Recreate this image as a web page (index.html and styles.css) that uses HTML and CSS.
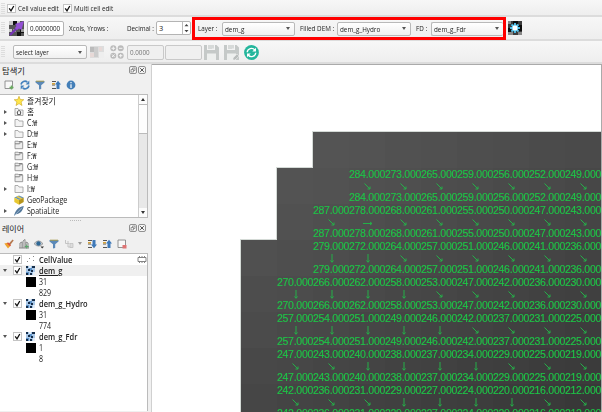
FILE: index.html
```html
<!DOCTYPE html>
<html lang="ko">
<head>
<meta charset="utf-8">
<title>QGIS</title>
<link rel="stylesheet" href="styles.css">
</head>
<body>
<svg class="defs" width="0" height="0">
  <symbol id="check" viewBox="0 0 9 9"><rect x=".5" y=".5" width="8" height="8" fill="#fff" stroke="#c4c4c4"/><path d="M2.2 4.4 4 6.8 6.8 2" fill="none" stroke="#111" stroke-width="1.3"/></symbol>
  <symbol id="folder" viewBox="0 0 10 10"><path d="M1 8.5v-7h3l1 1.500h4v5.500z" fill="#f3f3f3" stroke="#9a9a9a" stroke-width=".8"/></symbol>
  <symbol id="drive" viewBox="0 0 10 10"><path d="M1 8.700V1.200h3.200l.8 1h3.700v6.500z" fill="#eee" stroke="#858585" stroke-width=".8"/><path d="M1 3.800h4.500l1-1M5 1.500h3.500" fill="none" stroke="#777" stroke-width=".9"/></symbol>
  <symbol id="raster" viewBox="0 0 9 9"><path fill="#a9c8e8" d="M0 0h9v9H0z"/><path fill="#5c92c8" d="M3 2h3v3H3zM0 6h3v3H0z"/><path fill="#e4eef8" d="M3 0h2v2H3zM7 6h2v3H7z"/><path fill="#152d49" d="M0 0h2v2H0zM6 0h3v2H6zM2 3h2v2H2zM5 4h2v2H5zM0 7h2v2H0zM4 7h2v2H4z"/></symbol>
  <symbol id="funnel" viewBox="0 0 10 10"><path d="M.5 1h9v1.500L6.200 5.200V9L4 9.500V5.200L.5 2.500z" fill="#5b89b8"/><path d="M1 1.200h8" stroke="#a99b4e" stroke-width="1"/></symbol>
  <symbol id="refresh" viewBox="0 0 10 10"><path d="M1 4.500C1.500 1.500 5 .3 7.300 2M9 5.500C8.500 8.500 5 9.700 2.700 8" fill="none" stroke="#4581bd" stroke-width="1.700"/><path d="M9.300.5v4H5.600zM.7 9.500v-4h3.700z" fill="#4581bd"/></symbol>
  <symbol id="sheet" viewBox="0 0 10 10"><path d="M1 1h7.500v7.500H1z" fill="#f8f8f8" stroke="#888" stroke-width=".9"/></symbol>
  <symbol id="tree-arrow" viewBox="0 0 10 10"><path d="M1 1.500h4M1 5h3M1 8.500h4" stroke="#555" stroke-width="1.200"/><path d="M5.500 9V4.500H4L7 .8l3 3.700H8.500V9z" fill="#3e79b8"/><path d="M1 3h3v1.500H1z" fill="#d9a53b"/></symbol>
  <symbol id="float" viewBox="0 0 8 8"><rect x=".5" y=".5" width="7" height="7" rx="1.500" fill="#f5f5f5" stroke="#777" stroke-width=".8"/><path d="M2 3.500h2.500V6H2zM3.500 3.500V2H6v2.500H4.500" fill="none" stroke="#777" stroke-width=".7"/></symbol>
  <symbol id="close" viewBox="0 0 8 8"><rect x=".5" y=".5" width="7" height="7" rx="1.500" fill="#f5f5f5" stroke="#777" stroke-width=".8"/><path d="m2.200 2.200 3.600 3.600m0-3.600L2.200 5.800" stroke="#555" stroke-width="1"/></symbol>
  <symbol id="save" viewBox="0 0 15 15"><path d="M0 0h3v5h8V0h1.500L15 2.500V15H0z" fill="#c5c9c8"/><path d="M8 0h2v3.500H8zM4 0h4v4H4z" fill="#d7dad9"/><path d="M3 8.500h9V15H3z" fill="#edefee"/></symbol>
</svg>

<header class="bar bar-options">
  <i class="grip"></i>
  <label class="opt"><svg class="chk"><use href="#check"/></svg><span class="t w41">Cell value edit</span></label>
  <label class="opt opt2"><svg class="chk"><use href="#check"/></svg><span class="t">Multi cell edit</span></label>
</header>

<div class="bar bar-fields">
  <i class="grip"></i>
  <svg class="ico-cells" viewBox="0 0 15 15"><path fill="#555" d="M0 0h15v15H0z"/><path fill="#c9c9c9" d="M0 0h4v4H0zM8 0h3v4H8zM0 8h3v3H0z"/><path fill="#111" d="M4 0h4v4H4zM11 8h4v4h-4zM8 11h4v4H8z"/><path fill="#999" d="M4 8h3v3H4zM12 8h3v3h-3z"/><path d="m1 14 7-7" stroke="#7434b5" stroke-width="2.400"/><path fill="#9350d4" d="M15 0 12.500 9 10 7.500 8 9 6 7l1.500-2L6 3z"/></svg>
  <span class="field f-xy"><span class="n">0.0000000</span></span>
  <span class="t l-xy">Xcols, Yrows :</span>
  <span class="t l-dec">Decimal :</span>
  <span class="field f-dec">3<svg viewBox="0 0 7 12"><path d="M0 0v12" stroke="#bbb"/><path d="M2 4.200 4 2l2 2.200zM2 8l2 2.200L6 8z" fill="#444"/></svg></span>
  <div class="marked">
    <span class="t l-layer">Layer :</span><span class="combo c1"><span class="n">dem_g</span></span>
    <span class="t l-dem">Filled DEM :</span><span class="combo c2"><span class="n">dem_g_Hydro</span></span>
    <span class="t l-fd">FD :</span><span class="combo c3"><span class="n">dem_g_Fdr</span></span>
  </div>
  <svg class="ico-gear" viewBox="0 0 14 14"><path fill="#3c3c3c" d="M0 0h14v14H0z"/><path fill="#0d0d0d" d="M5 0h5v3H5zM10 4h4v6h-4zM0 7h3v4H0z"/><path fill="#888" d="M0 0h3v3H0zM10 11h4v3h-4zM0 11h5v3H0z"/><path d="M7 2v10M2 7h10M3.500 3.500l7 7m0-7-7 7" stroke="#48b9e6" stroke-width="1.900"/><circle cx="7" cy="7" r="3" fill="#fff" stroke="#6bd0f4"/></svg>
</div>

<div class="bar bar-edit">
  <i class="grip"></i>
  <span class="combo c-sel"><span class="n">select layer</span></span>
  <svg class="ico-dim" viewBox="0 0 14 12"><path fill="#ddd" d="M0 0h14v12H0z"/><path fill="#bbb" d="M0 1h4v5H0z"/><path fill="#ccc" d="M4 1h4v10H4z"/><path fill="#e7d9d7" d="M0 7h4v4H0zM9 1h3v4H9z"/><path fill="#eee" d="M9 6h5v6H9z"/></svg>
  <svg class="ico-ops" viewBox="0 0 14 14"><g fill="#bbb"><circle cx="3.300" cy="3.300" r="3"/><circle cx="10.700" cy="3.300" r="3"/><circle cx="3.300" cy="10.700" r="3"/><circle cx="10.700" cy="10.700" r="3"/></g><path d="M1.500 3.300h3.600M3.300 1.500v3.600M9 3.300h3.400M2 9.400l2.600 2.600m0-2.600L2 12M9 10.700h3.400M10.700 9v3.400" stroke="#f5f5f5"/></svg>
  <span class="field off f-v"><span class="n">0.0000</span></span><span class="field off f-e"></span>
  <svg class="ico-save"><use href="#save"/></svg>
  <svg class="ico-save s2" viewBox="0 0 15 15"><use href="#save"/><path d="m9 13 4-4 2 2-4 4H9z" fill="#b9bdbc" stroke="#eee" stroke-width=".6"/></svg>
  <svg class="ico-sync" viewBox="0 0 15 15"><circle cx="7.500" cy="7.500" r="7.400" fill="#24b69c"/><path d="M3.200 7.300A4.300 4.300 0 0 1 10.800 5M11.800 7.700A4.300 4.300 0 0 1 4.200 10" fill="none" stroke="#fff" stroke-width="1.400"/><path d="M12 2.800v3.700H8.300zM3 12.200V8.500h3.700z" fill="#fff"/></svg>
</div>

<main class="work">
  <aside class="docks">
    <section class="dock browser">
      <h2>탐색기<span class="ctl"><svg><use href="#float"/></svg><svg><use href="#close"/></svg></span></h2>
      <div class="tools">
        <svg viewBox="0 0 10 10"><use href="#sheet"/><path d="M7.500 5.500v4M5.500 7.500h4" stroke="#6aad5f" stroke-width="1.400"/></svg>
        <svg><use href="#refresh"/></svg>
        <svg><use href="#funnel"/></svg>
        <svg><use href="#tree-arrow"/></svg>
        <svg viewBox="0 0 10 10"><circle cx="5" cy="5" r="4.400" fill="#447fb8"/><path d="M5 4.300V8M5 2v1.300" stroke="#fff" stroke-width="1.200"/></svg>
      </div>
      <div class="list">
        <ul class="tree">
          <li><b></b><svg viewBox="0 0 10 10"><path d="m5 .3 1.300 3.200 3.500.2L7.100 6l.9 3.500-3-1.900-3 1.900L2.900 6 .2 3.700l3.500-.2z" fill="#ffe64a" stroke="#c9a51c" stroke-width=".6"/></svg><span class="ko">즐겨찾기</span></li>
          <li><b class="r"></b><svg viewBox="0 0 10 10"><use href="#folder"/><path d="M2.800 5.300 5 3.300l2.200 2M3.500 5v2.500h3V5" fill="none" stroke="#555" stroke-width=".9"/></svg><span class="ko">홈</span></li>
          <li><b class="r"></b><svg><use href="#folder"/></svg><span>C:₩</span></li>
          <li><b class="r"></b><svg><use href="#folder"/></svg><span>D:₩</span></li>
          <li><b></b><svg><use href="#drive"/></svg><span>E:₩</span></li>
          <li><b></b><svg><use href="#drive"/></svg><span>F:₩</span></li>
          <li><b></b><svg><use href="#drive"/></svg><span>G:₩</span></li>
          <li><b></b><svg><use href="#drive"/></svg><span>H:₩</span></li>
          <li><b class="r"></b><svg><use href="#folder"/></svg><span>I:₩</span></li>
          <li><b></b><svg viewBox="0 0 10 10"><path d="m5 .5 4.700 2L5 5 .3 2.500z" fill="#6494bc"/><path d="M.3 2.500 5 5v4.700L.3 7z" fill="#e8c832"/><path d="M9.700 2.500 5 5v4.700L9.700 7z" fill="#b6951c"/><path d="m3 1.500 4.500 2.200" stroke="#e9cb47" stroke-width="1.500"/></svg><span>GeoPackage</span></li>
          <li><b class="r"></b><svg viewBox="0 0 10 10"><path d="M0 10C1 5 4 1 9.800 0 8.800 5 6 8 2 8.200z" fill="#54799c"/><path d="M.5 9.500 8 1.700" stroke="#bed2e4" stroke-width=".6"/></svg><span>SpatiaLite</span></li>
          <li><b></b><svg viewBox="0 0 10 10"><path d="M0 3C2 0 8 0 10 3v7H0z" fill="#41729e"/></svg></li>
        </ul>
        <div class="scroll"><i class="up"></i><i class="thumb"></i><i class="track"></i><i class="down"></i></div>
      </div>
    </section>
    <div class="split"></div>
    <section class="dock layers">
      <h2>레이어<span class="ctl"><svg><use href="#float"/></svg><svg><use href="#close"/></svg></span></h2>
      <div class="tools tools2">
        <svg viewBox="0 0 10 10"><path d="m4.500 5 4-4.500 1.200 1L6 6.200z" fill="#b5784e"/><path d="m.3 4.500 3.200-.8 3 3L4 9.500z" fill="#eda22d"/><path d="m3.500 3.700 3 3" stroke="#d94a36" stroke-width="1.400"/></svg>
        <svg viewBox="0 0 10 10"><path d="M1 9V4l2-1v6M4 9V2l2-1.500V9M7 9V3l2 1v5M0 9h10" fill="none" stroke="#888" stroke-width="1"/><path d="M7.700 5.500v4M5.700 7.500h4" stroke="#5aa56b"/></svg>
        <svg viewBox="0 0 10 10"><path d="M0 4.700Q4.500-1 9 4.700 4.500 9.500 0 4.700z" fill="#c6cbd0" stroke="#777" stroke-width=".6"/><circle cx="4.500" cy="4.500" r="2.200" fill="#2f6794"/><path d="M6.500 7.500h3.500L8.200 9.500z" fill="#333"/></svg>
        <svg><use href="#funnel"/></svg>
        <svg viewBox="0 0 10 10"><path d="M1.500 1v3.500h4M4 2v6h4" fill="none" stroke="#c4c4c4"/><path d="M6 4.500h3v4H6z" fill="#ddd" stroke="#bbb" stroke-width=".7"/></svg>
        <i class="dd"></i>
        <svg viewBox="0 0 10 10"><path d="M1 1.500h4M1 5h3M1 8.500h4" stroke="#555" stroke-width="1.200"/><path d="M5.500 1v4.500H4L7 9.200l3-3.700H8.500V1z" fill="#3e79b8"/><path d="M1 3h3v1.500H1z" fill="#d9a53b"/></svg>
        <svg><use href="#tree-arrow"/></svg>
        <svg viewBox="0 0 10 10"><use href="#sheet"/><path d="M5.500 6h4v3.500h-4z" fill="#df7474"/></svg>
      </div>
      <ul class="tree ltree">
        <li><b></b><svg class="chk"><use href="#check"/></svg><svg class="ly" viewBox="0 0 9 9"><path d="M1 6h1v1H1zM3 3h1v1H3zM7 1h1v1H7zM7 5h1v1H7z" fill="#888"/></svg><strong>CellValue</strong><svg class="mem" viewBox="0 0 10 7"><path d="M1 1.500h8v4H1z" fill="#fff" stroke="#666" stroke-width=".8"/><path d="M2.500 0v1M5 0v1M7.500 0v1M2.500 6v1M5 6v1M7.500 6v1" stroke="#666" stroke-width=".8"/></svg></li>
        <li class="sel"><b class="d"></b><svg class="chk"><use href="#check"/></svg><svg class="ly"><use href="#raster"/></svg><strong><u>dem_g</u></strong></li>
        <li class="leg"><i></i><span>31</span></li>
        <li class="leg"><i class="w"></i><span>829</span></li>
        <li><b class="d"></b><svg class="chk"><use href="#check"/></svg><svg class="ly"><use href="#raster"/></svg><strong>dem_g_Hydro</strong></li>
        <li class="leg"><i></i><span>31</span></li>
        <li class="leg"><i class="w"></i><span>774</span></li>
        <li><b class="d"></b><svg class="chk"><use href="#check"/></svg><svg class="ly"><use href="#raster"/></svg><strong>dem_g_Fdr</strong></li>
        <li class="leg"><i></i><span>1</span></li>
        <li class="leg"><i class="w"></i><span>8</span></li>
      </ul>
    </section>
  </aside>
  <div class="canvas"><div class="grid" id="grid"></div></div>
</main>
<script src="map.js"></script>
</body>
</html>
```
FILE: styles.css
```css
* { box-sizing: border-box; }
body { margin: 0; width: 602px; height: 412px; overflow: hidden; background: #f0f0f0; color: #222; font: 8.5px/11px "Open Sans", "Noto Sans CJK KR", sans-serif; display: flex; flex-direction: column; }
.defs { position: absolute; }
svg { display: block; flex: none; }
.t, .n { white-space: nowrap; font-size: 7.6px; flex: none; transform: scaleX(.83); transform-origin: 0 50%; }
.n { display: inline-block; }
.bar { display: flex; align-items: center; flex: none; background: linear-gradient(#f7f7f7, #eee); border-bottom: 2px solid #dcdcdc; padding-left: 1px; }
.bar-options { height: 17px; padding-top: 2px; }
.bar-fields { height: 24px; }
.bar-edit { height: 23px; padding-top: 1px; }
.grip { width: 4px; height: 12px; flex: none; background: repeating-linear-gradient(#ddd 0 1px, transparent 1px 2px); }
.opt { display: flex; align-items: center; gap: 2px; margin-left: 2px; }
.opt2 { margin-left: 5px; }
.w41 { width: 40px; }
.chk { width: 9px; height: 9px; }
.field { height: 15px; border: 1px solid #b4b4b4; border-radius: 2px; background: #fff; font-size: 7.4px; line-height: 13px; padding-left: 2px; flex: none; white-space: nowrap; }
.combo { height: 14px; border: 1px solid #b9b9b9; border-radius: 2px; background: linear-gradient(#fff, #f0f0f0); line-height: 12px; padding: 0 4px 0 2px; flex: none; display: flex; justify-content: space-between; align-items: center; white-space: nowrap; }
.combo::after { content: ""; border: 2.5px solid transparent; border-top: 3px solid #555; border-bottom: 0; }
.ico-cells { width: 15px; height: 15px; margin-left: 4px; }
.f-xy { width: 37px; margin-left: 3px; }
.l-xy { width: 53px; margin-left: 5px; }
.l-dec { width: 29px; margin-left: 5px; }
.f-dec { width: 35px; height: 14px; display: flex; justify-content: space-between; }
.f-dec svg { width: 8px; height: 12px; }
.f-xy .n { transform: scaleX(.82); }
.marked { width: 314px; height: 23px; margin: 1px 0 0 1px; border: 3px solid #f00; display: flex; align-items: center; padding-left: 3px; flex: none; position: relative; }
.l-layer { width: 24px; }
.c1 { width: 73px; }
.l-dem { width: 37px; margin-left: 5px; }
.c2 { width: 74px; }
.l-fd { width: 15px; margin-left: 5px; }
.c3 { width: 72px; border-right: 0; }
.ico-gear { width: 14px; height: 14px; margin-left: 2px; }
.c-sel { width: 74px; margin-left: 8px; }
.ico-dim { width: 14px; height: 12px; margin-left: 3px; }
.ico-ops { width: 14px; height: 14px; margin-left: 6px; }
.off { background: #f0f0f0; color: #777; border-color: #c9c9c9; }
.f-v { width: 37px; margin-left: 3px; }
.f-e { width: 37px; margin-left: 1px; }
.ico-save { width: 15px; height: 15px; margin-left: 2px; }
.s2 { margin-left: 5px; }
.ico-sync { width: 15px; height: 15px; margin-left: 5px; }

.work { display: flex; flex: 1; min-height: 0; }
.docks { width: 152px; flex: none; display: flex; flex-direction: column; border-right: 1px solid #d0d0d0; }
.dock h2 { margin: 0; height: 12px; padding: 0 5px 0 2px; display: flex; align-items: center; font-weight: 400; font-size: 8px; }
.browser h2 { font-size: 8.300px; }
.ctl { margin-left: auto; display: flex; gap: 1px; }
.ctl svg { width: 8px; height: 8px; }
.tools { height: 18px; padding-left: 4px; display: flex; align-items: center; gap: 5.500px; }
.tools svg { width: 10px; height: 10px; }
.tools2 { gap: 5px; }
.dd { border: 2.500px solid transparent; border-top: 3px solid #999; border-bottom: 0; margin: 0 0 0 -1px; }
.list { height: 124px; width: 148px; background: #fff; border: solid #bbb; border-width: 1px 1px 1px 0; display: flex; overflow: hidden; }
.tree { list-style: none; margin: 0; padding: 0; flex: 1; }
.tree li { height: 11px; display: flex; align-items: center; }
.tree li > svg { width: 10px; height: 10px; margin-left: 5px; }
.tree li > span { margin-left: 3px; white-space: nowrap; transform: scaleX(.83); transform-origin: 0 50%; }
.tree li > .ko { transform: scaleX(.92); }
.tree b { width: 9px; flex: none; display: flex; justify-content: flex-end; padding-right: 2px; }
.r::before { content: ""; border: 2.500px solid transparent; border-left: 3px solid #555; border-right: 0; }
.d::before { content: ""; border: 2.500px solid transparent; border-top: 3px solid #555; border-bottom: 0; }
.scroll { width: 9px; flex: none; background: #e8e8e8; display: flex; flex-direction: column; align-items: center; border-left: 1px solid #ccc; }
.up, .down { height: 9px; width: 8px; background: #fcfcfc; display: flex; align-items: center; justify-content: center; }
.up::before { content: ""; border: 2px solid transparent; border-bottom: 3px solid #333; border-top: 0; }
.down::before { content: ""; border: 2px solid transparent; border-top: 3px solid #333; border-bottom: 0; }
.thumb { height: 30px; width: 8px; background: #fdfdfd; border: solid #bbb; border-width: 1px 0; }
.track { flex: 1; }
.split { height: 4px; background: #f0f0f0; display: flex; justify-content: center; align-items: center; }
.split::before { content: ""; width: 11px; height: 1px; background: repeating-linear-gradient(90deg, #bbb 0 1px, transparent 1px 2px); }
.layers { flex: 1; }
.tools2 { height: 19px; }
.ltree { width: 148px; height: 158px; background: #fff; border: solid #bbb; border-width: 1px 1px 0 0; padding-top: 0; }
.ltree li > svg.chk { width: 9px; height: 9px; margin-left: 4px; }
.ltree li > svg.ly { width: 9px; height: 9px; margin-left: 4px; }
.ltree strong { margin-left: 4px; font-weight: 600; transform: scaleX(.88); transform-origin: 0 50%; }
.ltree li > svg.mem { width: 10px; height: 7px; margin: 0 0 0 auto; }
.sel { background: #f0f0f0; }
.leg i { width: 10px; height: 10px; margin-left: 26px; background: #000; flex: none; }
.leg .w { background: none; }

.canvas { flex: 1; background: #fff; border: solid #aaa; border-width: 1px 1px 0 0; padding: 67px 0 0 89px; overflow: hidden; }
.grid { display: grid; grid-template-columns: repeat(10, 36px); grid-auto-rows: 36px; filter: drop-shadow(-1px 0 0 #d4dad6) drop-shadow(0 -1px 0 #d4dad6); }
.cell { display: flex; flex-direction: column; justify-content: space-between; align-items: flex-start; color: #1fc447; font: 10.5px/11px "Liberation Sans", Arial, sans-serif; padding: 1px 0; white-space: nowrap; letter-spacing: -0.28px; -webkit-text-stroke: .15px #1fc447; }
.cell svg { width: 9px; height: 9px; align-self: center; }
.cell path { fill: none; stroke: #24b048; stroke-width: 1; }
```
FILE: map.js
```javascript
// Each row lists elevation and flow direction: s = south, e = east, x = south-east.
const rows = [
  [2, ""],
  [3, "284x 273x 265x 259x 256x 252x 249x"],
  [2, "287x 278e 268x 261x 255x 250x 247x 243x"],
  [2, "279s 272s 264x 257x 251x 246x 241x 236x"],
  [1, "270s 266s 262s 258s 253x 247x 242x 236x 230x"],
  [1, "257s 254s 251s 249s 246s 242x 237x 231x 225x"],
  [1, "247x 243x 240s 238s 237s 234s 229x 225x 219x"],
  [1, "242x 236x 231x 229s 227s 224s 220s 216x 212x"]
];
const paths = { s: "M5 0v8M3.500 6.500 5 8.300 6.500 6.500", e: "M0 5.500h9M7 4 9 5.500 7 7", x: "M1.500 1.500 7 7M7 4.500v2.500H4.500" };
const edge = [2, 1, 1, 0, 0, 0, 0, 0];
const grid = document.getElementById("grid");
rows.forEach(([first, data], r) => {
  const values = data ? data.split(" ") : [];
  for (let c = 0; c < 10; c++) {
    const cell = document.createElement("div");
    if (c >= edge[r]) {
      const g = Math.round(87 - 1.5 * c - 2.5 * r);
      cell.style.background = `rgb(${g},${g},${g})`;
    }
    const v = values[c - first];
    if (c >= first && v) {
      cell.className = "cell";
      const n = v.slice(0, 3) + ".000";
      cell.innerHTML = `<span>${n}</span><svg viewBox="0 0 9 9"><path d="${paths[v[3]]}"/></svg><span>${n}</span>`;
    }
    grid.append(cell);
  }
});
```
